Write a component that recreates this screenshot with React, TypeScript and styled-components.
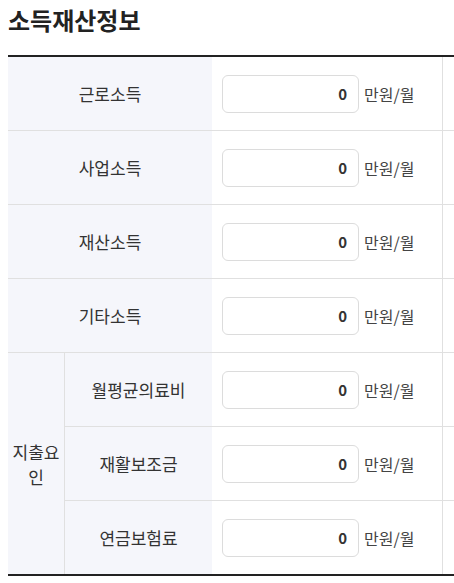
import React from "react";
import styled, { createGlobalStyle } from "styled-components";

const Global = createGlobalStyle`
  html, body { margin: 0; padding: 0; background: #fff; overflow: hidden; }
  body { font-family: "Noto Sans CJK KR", "Noto Sans", sans-serif; color: #333; }
  * { box-sizing: border-box; }
`;

const Page = styled.div`
  padding: 5px 0 0 8px;
  width: 454px;
`;

const Title = styled.h2`
  margin: 0 0 20px;
  font-size: 24px;
  line-height: 30px;
  font-weight: 700;
  color: #222;
`;

const Table = styled.div`
  border-top: 2px solid #222;
  border-bottom: 2px solid #222;
  width: 446px;
`;

const Row = styled.div`
  display: flex;
  & + & { border-top: 1px solid #e0e0e0; }
`;

const Head = styled.div<{ $w: number }>`
  width: ${(p) => p.$w}px;
  flex: none;
  height: 73px;
  background: #f5f6fb;
  display: flex;
  align-items: center;
  justify-content: center;
  font-size: 17px;
  color: #333;
`;

const Data = styled.div`
  width: 231px;
  flex: none;
  height: 73px;
  border-right: 1px solid #e0e0e0;
  display: flex;
  align-items: center;
  padding-left: 10px;
  gap: 5px;
`;

const Extra = styled.div`
  flex: 1;
`;

const Input = styled.input`
  width: 137px;
  height: 38px;
  border: 1px solid #dcdcdc;
  border-radius: 6px;
  background: #fff;
  text-align: right;
  padding: 0 11px 0 8px;
  font-family: "Noto Sans CJK KR", "Noto Sans", sans-serif;
  font-size: 15px;
  font-weight: 700;
  color: #333;
  outline: none;
`;

const Unit = styled.span`
  font-size: 16px;
  color: #444;
  white-space: nowrap;
`;

const Group = styled.div`
  display: flex;
  border-top: 1px solid #e0e0e0;
`;

const GroupHead = styled.div`
  width: 57px;
  flex: none;
  background: #f5f6fb;
  border-right: 1px solid #e0e0e0;
  display: flex;
  align-items: center;
  justify-content: center;
  text-align: center;
  padding: 0 2px;
  font-size: 17px;
  line-height: 25px;
  color: #333;
  word-break: break-all;
`;

const GroupBody = styled.div`
  flex: 1;
  display: flex;
  flex-direction: column;
`;

type Item = { label: string };

const Field = ({ label, w }: { label: string; w: number }) => (
  <>
    <Head $w={w}>{label}</Head>
    <Data>
      <Input defaultValue="0" />
      <Unit>만원/월</Unit>
    </Data>
    <Extra />
  </>
);

const incomes: Item[] = [
  { label: "근로소득" },
  { label: "사업소득" },
  { label: "재산소득" },
  { label: "기타소득" },
];

const expenses: Item[] = [
  { label: "월평균의료비" },
  { label: "재활보조금" },
  { label: "연금보험료" },
];

export default function App() {
  return (
    <Page>
      <Global />
      <Title>소득재산정보</Title>
      <Table>
        {incomes.map((it) => (
          <Row key={it.label}>
            <Field label={it.label} w={204} />
          </Row>
        ))}
        <Group>
          <GroupHead>지출요인</GroupHead>
          <GroupBody>
            {expenses.map((it) => (
              <Row key={it.label}>
                <Field label={it.label} w={147} />
              </Row>
            ))}
          </GroupBody>
        </Group>
      </Table>
    </Page>
  );
}
